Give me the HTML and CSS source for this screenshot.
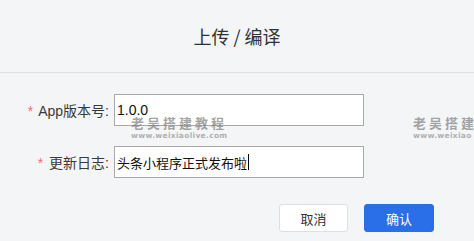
FILE: index.html
```html
<!DOCTYPE html>
<html lang="zh">
<head>
<meta charset="utf-8">
<link rel="stylesheet" href="styles.css">
</head>
<body>
<div class="dialog">
  <div class="header">上传 / 编译</div>
  <div class="form">
    <div class="row">
      <label class="label"><span class="star">*</span> App版本号:</label>
      <div class="input">1.0.0</div>
    </div>
    <div class="row">
      <label class="label"><span class="star">*</span> 更新日志:</label>
      <div class="input cjk">头条小程序正式发布啦<span class="caret"></span></div>
    </div>
    <div class="actions">
      <button class="btn">取消</button>
      <button class="btn primary">确认</button>
    </div>
  </div>
  <div class="wm wm1"><div class="wm-cn">老吴搭建教程</div><div class="wm-en">www.weixiaolive.com</div></div>
  <div class="wm wm2"><div class="wm-cn">老吴搭建</div><div class="wm-en">www.weixiao</div></div>
</div>
</body>
</html>
```
FILE: styles.css
```css
html, body {
  margin: 0;
  padding: 0;
  background: #f4f5f7;
  width: 474px;
  height: 241px;
  overflow: hidden;
}
.dialog {
  position: relative;
  width: 474px;
  height: 241px;
  overflow: hidden;
  font-family: "Liberation Sans", "Noto Sans CJK SC", sans-serif;
  color: #333;
}
.header {
  height: 72px;
  border-bottom: 1px solid #dfe1e6;
  display: flex;
  align-items: center;
  justify-content: center;
  font-family: "Noto Sans CJK SC", sans-serif;
  font-size: 18px;
  color: #303133;
}
.form {
  padding-top: 21px;
  display: flex;
  flex-direction: column;
  gap: 20px;
}
.row {
  display: flex;
  align-items: center;
  height: 32px;
}
.label {
  width: 109px;
  text-align: right;
  padding-right: 5px;
  font-size: 14px;
  color: #3a3a3a;
  font-family: "Liberation Sans", "Noto Sans CJK SC", sans-serif;
  white-space: nowrap;
}
.star {
  color: #f56c6c;
  margin-right: 2px;
}
.input {
  width: 250px;
  height: 32px;
  box-sizing: border-box;
  background: #fff;
  border: 1px solid #a9a9a9;
  font-size: 14px;
  color: #111;
  padding-left: 2px;
  display: flex;
  align-items: center;
  font-family: "Liberation Sans", sans-serif;
}
.input.cjk {
  font-family: "Noto Sans CJK SC", sans-serif;
  font-size: 13px;
}
.caret {
  display: inline-block;
  width: 1px;
  height: 16px;
  background: #000;
  margin-left: 1px;
}
.actions {
  display: flex;
  justify-content: flex-end;
  gap: 16px;
  padding-right: 40px;
  margin-top: 6px;
}
.btn {
  width: 69px;
  height: 28px;
  border: 1px solid #dcdfe6;
  background: #fff;
  border-radius: 3px;
  font-family: "Noto Sans CJK SC", sans-serif;
  font-size: 13px;
  color: #333;
  padding: 0;
}
.btn.primary {
  width: 70px;
  background: #2a6ee8;
  border-color: #2a6ee8;
  color: #fff;
}
.wm {
  position: absolute;
  color: rgba(125, 125, 125, 0.7);
  font-weight: bold;
  text-align: left;
}
.wm1 { left: 131px; top: 114px; }
.wm2 { left: 413px; top: 114px; }
.wm-cn {
  font-family: "Noto Sans CJK SC", sans-serif;
  font-size: 13px;
  letter-spacing: 3px;
  line-height: 17px;
  white-space: nowrap;
}
.wm-en {
  font-family: "DejaVu Sans", sans-serif;
  font-size: 7.5px;
  letter-spacing: 0.3px;
  line-height: 10px;
  white-space: nowrap;
  color: rgba(125, 125, 125, 0.6);
}
```
